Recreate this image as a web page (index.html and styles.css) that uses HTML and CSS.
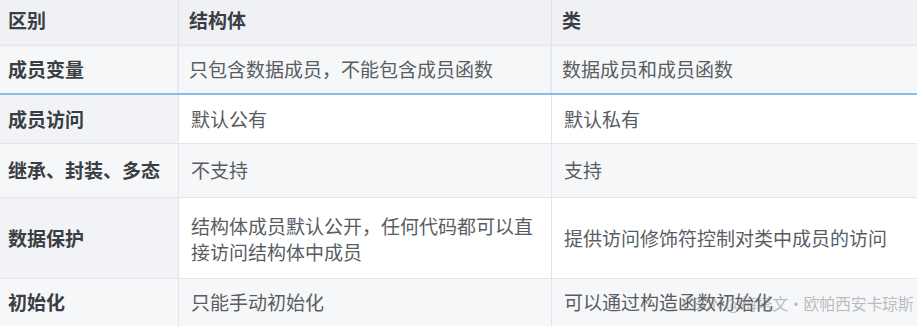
FILE: index.html
```html
<!DOCTYPE html>
<html lang="zh-CN">
<head>
  <meta charset="UTF-8">
  <title>结构体与类的区别</title>
  <link rel="stylesheet" href="styles.css">
</head>
<body>

<div class="wrap">
  <table class="compare">
    <thead>
      <tr class="row-head">
        <th class="col-key">区别</th>
        <th class="col-a">结构体</th>
        <th class="col-b">类</th>
      </tr>
    </thead>
    <tbody>
      <tr class="row-1 even">
        <td class="col-key">成员变量</td>
        <td>只包含数据成员，不能包含成员函数</td>
        <td>数据成员和成员函数</td>
      </tr>
      <tr class="row-2 shifted">
        <td class="col-key">成员访问</td>
        <td>默认公有</td>
        <td>默认私有</td>
      </tr>
      <tr class="row-3 even shifted">
        <td class="col-key">继承、封装、多态</td>
        <td>不支持</td>
        <td>支持</td>
      </tr>
      <tr class="row-4 shifted">
        <td class="col-key">数据保护</td>
        <td>结构体成员默认公开，任何代码都可以直<br>接访问结构体中成员</td>
        <td>提供访问修饰符控制对类中成员的访问</td>
      </tr>
      <tr class="row-5 even shifted">
        <td class="col-key">初始化</td>
        <td>只能手动初始化</td>
        <td>可以通过构造函数初始化</td>
      </tr>
    </tbody>
  </table>
  <div class="mark">CSDN @梅塔文·欧帕西安卡琼斯</div>
</div>

</body>
</html>
```

FILE: styles.css
```css
body {
  margin: 0;
  background: #ffffff;
  font-family: "Noto Sans CJK SC", "Noto Sans", sans-serif;
  font-size: 19px;
  color: #595d63;
}

.wrap {
  position: relative;
  width: 917px;
  height: 326px;
  overflow: hidden;
}

.compare {
  width: 917px;
  border-collapse: collapse;
  table-layout: fixed;
}

.compare th,
.compare td {
  padding: 0 0 0 10px;
  text-align: left;
  vertical-align: middle;
  border-right: 1px solid #e1e4e8;
  border-bottom: 1px solid #e3e5e8;
  line-height: 26px;
  white-space: nowrap;
}

.compare th {
  font-weight: bold;
  color: #3a3e44;
  background: #eff1f4;
}

.compare td.col-key {
  font-weight: bold;
  color: #3a3e44;
  background: #f2f3f6;
  padding-left: 8px;
}

.compare th.col-key {
  padding-left: 8px;
}

.col-key { width: 170px; }
.col-a { width: 362px; }

.compare td {
  background: #ffffff;
}

.compare tr.even td {
  background: #f6f7f8;
}

.row-head { height: 45px; }
.row-1 { height: 49px; }
.row-2 { height: 49px; }
.row-3 { height: 54px; }
.row-4 { height: 81px; }
.row-5 { height: 48px; }

.row-head th { padding-bottom: 4px; }

/* the selected row gets a blue underline */
.row-1 td {
  border-bottom: 2px solid #8db9f2;
  box-shadow: 0 2px 3px rgba(100, 160, 240, 0.35);
}

.shifted td:nth-child(2) { padding-left: 12px; }
.shifted td:nth-child(3) { padding-left: 12px; }

.row-4 td:nth-child(2) { padding-top: 2px; }

.compare th:last-child,
.compare td:last-child {
  border-right: none;
}

.mark {
  position: absolute;
  left: 682px;
  top: 291px;
  font-size: 16px;
  color: rgba(125, 129, 135, 0.5);
  letter-spacing: -0.3px;
  white-space: nowrap;
}
```
